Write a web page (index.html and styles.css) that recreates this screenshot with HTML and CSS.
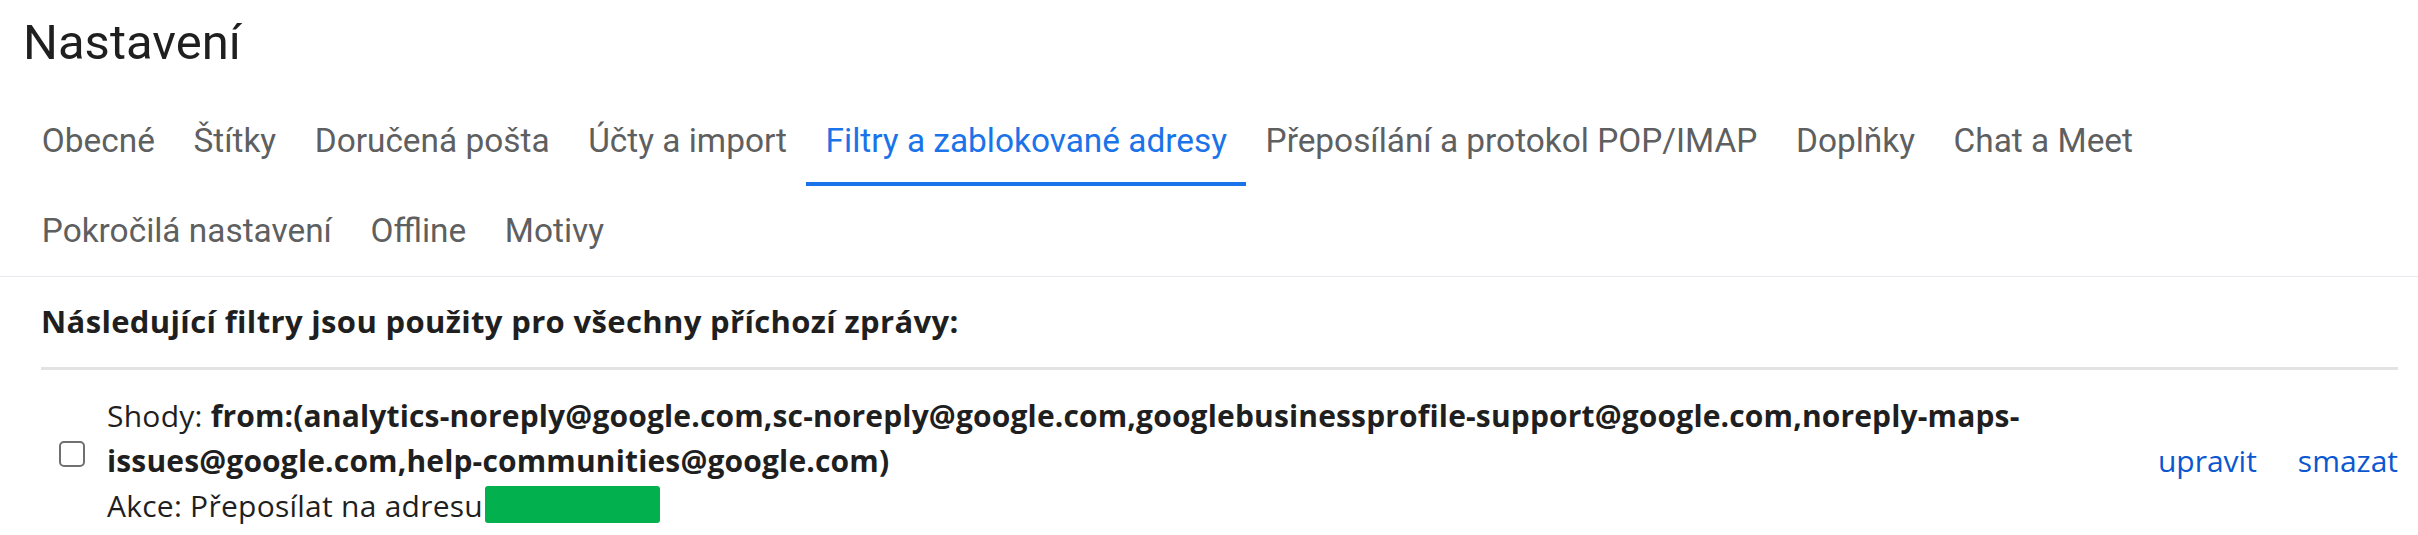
FILE: index.html
```html
<!DOCTYPE html>
<html lang="cs">
<head>
<meta charset="utf-8">
<title>Nastavení</title>
<link rel="stylesheet" href="styles.css">
</head>
<body>
<div class="page">
  <h1 class="title">Nastavení</h1>
  <nav class="tabs">
    <span class="tab">Obecné</span>
    <span class="tab">Štítky</span>
    <span class="tab">Doručená pošta</span>
    <span class="tab">Účty a import</span>
    <span class="tab active">Filtry a zablokované adresy</span>
    <span class="tab">Přeposílání a protokol POP/IMAP</span>
    <span class="tab">Doplňky</span>
    <span class="tab">Chat a Meet</span>
    <span class="tab">Pokročilá nastavení</span>
    <span class="tab">Offline</span>
    <span class="tab">Motivy</span>
  </nav>
  <section class="filters">
    <div class="filters-head">Následující filtry jsou použity pro všechny příchozí zprávy:</div>
    <div class="filter-row">
      <span class="checkbox"></span>
      <div class="filter-text">
        <div>Shody: <b>from:(analytics-noreply@google.com,sc-noreply@google.com,googlebusinessprofile-support@google.com,noreply-maps-issues@google.com,help-communities@google.com)</b></div>
        <div>Akce: Přeposílat na adresu<span class="redacted"></span></div>
      </div>
      <div class="actions">
        <a class="link">upravit</a>
        <a class="link">smazat</a>
      </div>
    </div>
  </section>
</div>
</body>
</html>
```
FILE: styles.css
```css
html, body {
  margin: 0;
  padding: 0;
  background: #ffffff;
}

body {
  font-family: Roboto, "Liberation Sans", Arial, sans-serif;
  color: #202124;
}

.page {
  width: 2418px;
}

.title {
  margin: 0;
  padding: 11px 0 21px 23px;
  font-size: 49px;
  line-height: 64px;
  font-weight: 400;
  color: #1f1f1f;
}

.tabs {
  display: flex;
  flex-wrap: wrap;
  padding: 0 0 0 22.5px;
  border-bottom: 1px solid #e6eaef;
}

.tab {
  display: flex;
  align-items: center;
  height: 90px;
  padding: 0 19.3px;
  font-size: 33.4px;
  line-height: 40px;
  color: #5e5f61;
  white-space: nowrap;
}

.tab.active {
  color: #1a73e8;
  box-shadow: inset 0 -4px 0 #1a73e8;
}

.filters {
  padding: 0 20px 0 41px;
  font-family: "Open Sans", Roboto, sans-serif;
}

.filters-head {
  padding: 24px 0 26px;
  font-size: 31px;
  line-height: 40px;
  font-weight: 700;
  letter-spacing: 0.35px;
  color: #1f1f1f;
  border-bottom: 3px solid #e3e3e3;
}

.filter-row {
  display: flex;
  align-items: center;
  padding: 23px 0 7px;
}

.checkbox {
  flex: none;
  width: 22px;
  height: 22px;
  border: 2px solid #707070;
  border-radius: 5px;
  margin: 0 22px 13px 18px;
}

.filter-text {
  flex: 1;
  min-width: 0;
  font-size: 30px;
  line-height: 45px;
  letter-spacing: 0.25px;
  color: #1f1f1f;
}

.filter-text b {
  font-weight: 700;
  letter-spacing: 0.15px;
}

.redacted {
  display: inline-block;
  width: 175px;
  height: 37px;
  margin-left: 2px;
  vertical-align: -6px;
  background: #03b04e;
  border-radius: 3px;
}

.actions {
  flex: none;
  display: flex;
  gap: 41px;
  margin-left: 20px;
  font-size: 30px;
  line-height: 45px;
}

.link {
  color: #0b57d0;
  text-decoration: none;
}
```
